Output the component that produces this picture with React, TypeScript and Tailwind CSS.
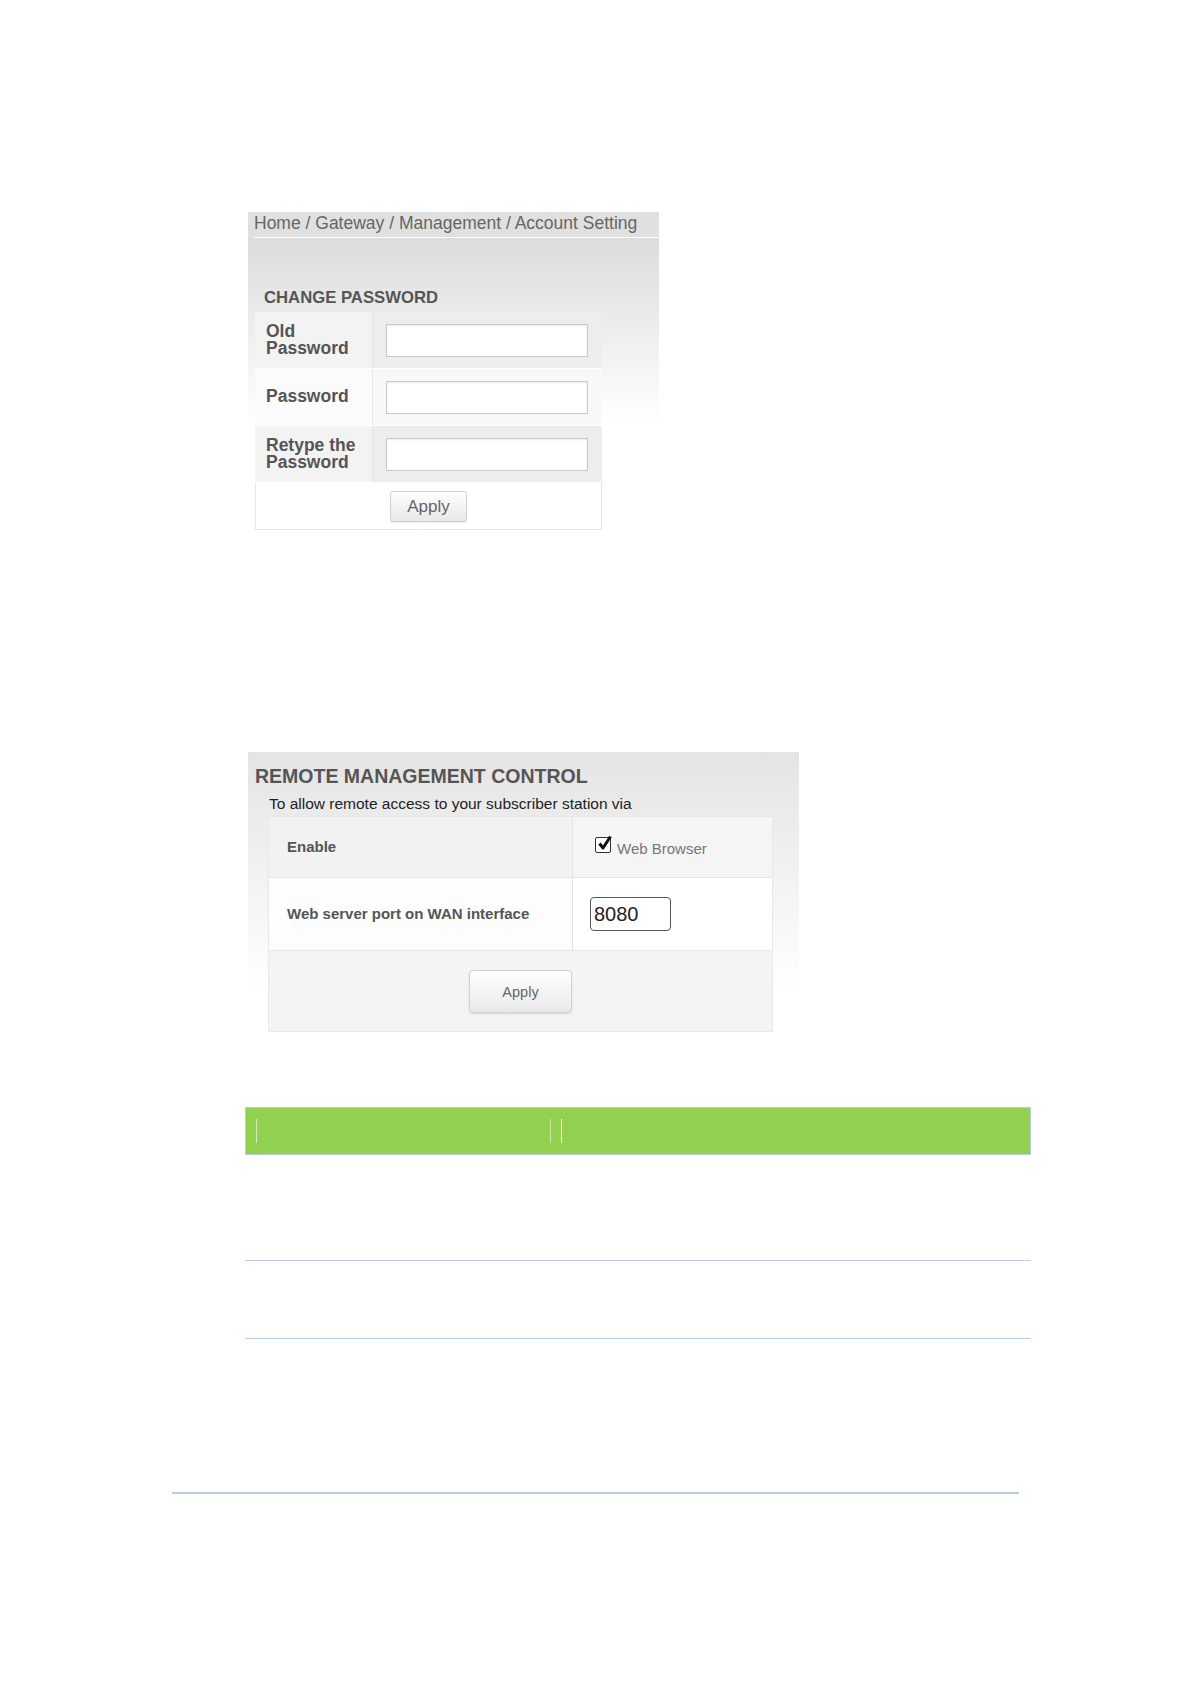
import React from "react";

const labelCls = "font-bold text-[#555] text-[17.5px] leading-[17.5px]";

function PwdRow({ label, tone }: { label: React.ReactNode; tone: "gray" | "light" }) {
  const left = tone === "gray" ? "bg-[#f3f3f3]" : "bg-[#fbfbfb]";
  const right = tone === "gray" ? "bg-[#ededed]" : "bg-[#f8f8f8]";
  return (
    <div className="flex h-[57px] border-b border-white">
      <div className={`flex w-[117px] items-center pl-[11px] ${left} ${labelCls}`}>{label}</div>
      <div className="w-px bg-[#e6e6e6]" />
      <div className={`flex flex-1 items-center pl-[13px] ${right}`}>
        <input
          type="password"
          className="h-[33px] w-[202px] border border-[#c9c9c9] bg-white shadow-[inset_0_1px_2px_rgba(0,0,0,0.08)] outline-none"
        />
      </div>
    </div>
  );
}

function CheckBox() {
  return (
    <span className="relative flex h-[16px] w-[16px] items-center justify-center rounded-[2px] border border-[#333] bg-white">
      <svg viewBox="0 0 16 16" className="absolute -top-[3px] left-[1px] h-[16px] w-[16px]">
        <path d="M2.5 8.5 L6 13 L13.5 1.5" fill="none" stroke="#111" strokeWidth="3" strokeLinejoin="round" />
      </svg>
    </span>
  );
}

export default function App() {
  return (
    <div className="h-[1684px] w-[1190px] overflow-hidden bg-white pt-[212px] font-['Liberation_Sans',Arial,sans-serif]">
      {/* account setting panel */}
      <div className="ml-[248px] w-[411px]">
        <div className="h-[25px] bg-[#e0e0e0] pl-[6px] text-[17.5px] leading-[23px] text-[#666]">
          Home / Gateway / Management / Account Setting
        </div>
        <div className="bg-[#e0e0e0] pl-[6px]">
          <div className="h-px bg-white" />
        </div>
        <div className="h-[292px] bg-[linear-gradient(180deg,#dcdcdc_0px,#ffffff_185px)] pt-[50px]">
          <div className="pl-[16px] text-[16.7px] font-bold leading-[20px] text-[#555]">CHANGE PASSWORD</div>
          <div className="ml-[7px] mt-[4px] w-[347px]">
            <PwdRow tone="gray" label={<span>Old<br />Password</span>} />
            <PwdRow tone="light" label="Password" />
            <PwdRow tone="gray" label={<span>Retype the<br />Password</span>} />
            <div className="flex h-[47px] items-start justify-center border border-t-0 border-[#e6e6e6] bg-white pt-[8px]">
              <button
                type="button"
                className="h-[31px] w-[77px] rounded-[3px] border border-[#cfcfcf] bg-[linear-gradient(180deg,#ffffff,#e8e8e8)] text-[17px] text-[#666] shadow-[0_1px_1px_rgba(0,0,0,0.08)]"
              >
                Apply
              </button>
            </div>
          </div>
        </div>
      </div>

      {/* remote management panel */}
      <div className="ml-[248px] mt-[222px] h-[288px] w-[551px] bg-[linear-gradient(180deg,#e4e4e4_0px,#ffffff_240px)] pt-[13px]">
        <div className="pl-[7px] text-[19.5px] font-bold leading-[22px] text-[#555]">REMOTE MANAGEMENT CONTROL</div>
        <div className="mt-[8px] pl-[21px] text-[15.5px] leading-[18px] text-[#222]">
          To allow remote access to your subscriber station via
        </div>
        <div className="ml-[20px] mt-[3px] w-[505px] border border-[#e8e8e8]">
          <div className="flex h-[60px]">
            <div className="flex w-[303px] items-center bg-[#f2f2f2] pl-[18px] text-[15px] font-bold text-[#555]">Enable</div>
            <div className="w-px bg-[#e4e4e4]" />
            <div className="flex flex-1 items-center gap-[6px] bg-[#f5f5f5] pl-[22px] pb-[4px]">
              <CheckBox />
              <span className="mt-[9px] text-[15px] text-[#777]">Web Browser</span>
            </div>
          </div>
          <div className="flex h-[73px] border-t border-[#e6e6e6]">
            <div className="flex w-[303px] items-center bg-[#fdfdfd] pl-[18px] text-[15px] font-bold text-[#555]">
              Web server port on WAN interface
            </div>
            <div className="w-px bg-[#e4e4e4]" />
            <div className="flex flex-1 items-center bg-white pl-[17px]">
              <input
                defaultValue="8080"
                className="h-[34px] w-[81px] rounded-[4px] border-[1.5px] border-[#555] bg-white pl-[3px] text-[20px] text-[#222] outline-none"
              />
            </div>
          </div>
          <div className="flex h-[81px] items-center justify-center border-t border-[#e6e6e6] bg-[#f4f4f4]">
            <button
              type="button"
              className="h-[43px] w-[103px] rounded-[4px] border border-[#d2d2d2] bg-[linear-gradient(180deg,#ffffff,#e9e9e9)] pt-[3px] text-[14.5px] text-[#666] shadow-[0_1px_2px_rgba(0,0,0,0.12)]"
            >
              Apply
            </button>
          </div>
        </div>
      </div>

      {/* green header bar */}
      <div className="ml-[245px] mt-[67px] flex h-[48px] w-[786px] items-center border border-[#b7cde0] bg-[#92d050] pl-[10px]">
        <div className="h-[24px] w-px bg-white/60" />
        <div className="ml-[293px] h-[24px] w-px bg-white/50" />
        <div className="ml-[10px] h-[24px] w-px bg-white" />
      </div>

      <div className="ml-[245px] mt-[105px] h-px w-[786px] bg-[#b8cce4]" />
      <div className="ml-[245px] mt-[77px] h-px w-[786px] bg-[#b8cce4]" />
      <div className="ml-[172px] mt-[153px] h-[2px] w-[847px] bg-[#b4cde0]" />
    </div>
  );
}
